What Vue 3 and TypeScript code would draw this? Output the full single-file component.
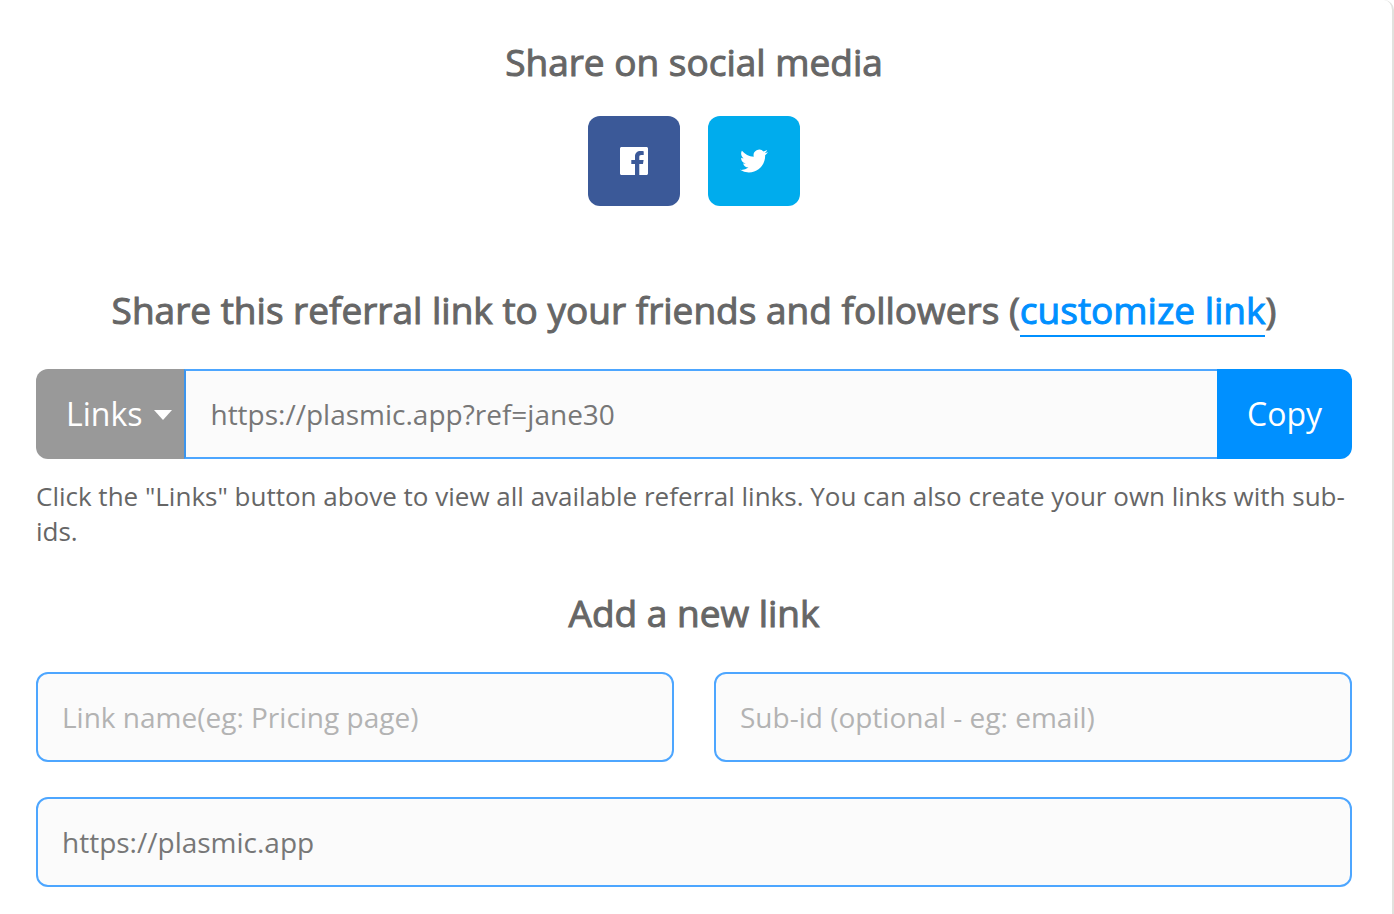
<script setup lang="ts">
import { ref } from 'vue'

const referral = ref('https://plasmic.app?ref=jane30')
const linkName = ref('')
const subId = ref('')
const target = ref('https://plasmic.app')

function copyLink(): void {
  navigator.clipboard?.writeText(referral.value)
}
</script>

<template>
  <main class="card">
    <h2 class="title">Share on social media</h2>
    <div class="social">
      <button class="social-button facebook" type="button" aria-label="Share on Facebook">
        <svg viewBox="0 0 28 28" width="28" height="28" aria-hidden="true">
          <path
            fill="#fff"
            d="M26.5 0H1.5C.7 0 0 .7 0 1.500V26.500C0 27.300.7 28 1.500 28H15V17.100H11.300V12.900H15V9.700C15 6.100 17.200 4.100 20.500 4.100C22 4.100 23.300 4.200 23.700 4.300V8.100H21.400C19.600 8.100 19.300 9 19.300 10.200V12.900H23.600L23 17.100H19.300V28H26.500C27.300 28 28 27.300 28 26.500V1.500C28 .7 27.300 0 26.500 0Z"
          />
        </svg>
      </button>
      <button class="social-button twitter" type="button" aria-label="Share on Twitter">
        <svg viewBox="0 0 24 24" width="28" height="28" aria-hidden="true">
          <path
            fill="#fff"
            d="M23.953 4.57a10 10 0 0 1-2.825.775 4.958 4.958 0 0 0 2.163-2.723c-.951.555-2.005.959-3.127 1.184a4.92 4.92 0 0 0-8.384 4.482C7.69 8.095 4.067 6.13 1.64 3.162a4.822 4.822 0 0 0-.666 2.475c0 1.71.87 3.213 2.188 4.096a4.904 4.904 0 0 1-2.228-.616v.06a4.923 4.923 0 0 0 3.946 4.827 4.996 4.996 0 0 1-2.212.085 4.936 4.936 0 0 0 4.604 3.417 9.867 9.867 0 0 1-6.102 2.105c-.39 0-.779-.023-1.17-.067a13.995 13.995 0 0 0 7.557 2.209c9.053 0 13.998-7.496 13.998-13.985 0-.21 0-.42-.015-.63A9.935 9.935 0 0 0 24 4.59z"
          />
        </svg>
      </button>
    </div>

    <h2 class="title">
      Share this referral link to your friends and followers (<a class="customize" href="#customize">customize link</a>)
    </h2>
    <div class="referral">
      <button class="links" type="button">
        Links
        <svg class="caret" viewBox="0 0 20 12" width="20" height="12" aria-hidden="true">
          <path d="M1 1H19L10 11Z" fill="#fff" />
        </svg>
      </button>
      <input v-model="referral" class="field joined" type="text" aria-label="Referral link" readonly />
      <button class="copy" type="button" @click="copyLink">Copy</button>
    </div>
    <p class="hint">
      Click the "Links" button above to view all available referral links. You can also create your own links with
      sub-ids.
    </p>

    <h2 class="title">Add a new link</h2>
    <form class="new-link" @submit.prevent>
      <input v-model="linkName" class="field" type="text" aria-label="Link name" placeholder="Link name(eg: Pricing page)" />
      <input v-model="subId" class="field" type="text" aria-label="Sub-id" placeholder="Sub-id (optional - eg: email)" />
      <input v-model="target" class="field wide" type="text" aria-label="Link address" />
    </form>
  </main>
</template>

<style>
body {
  margin: 0;
  background: #fff;
}
</style>

<style scoped>
.card {
  box-sizing: border-box;
  min-height: 100vh;
  padding: 36px 40px 27px 36px;
  border-right: 2px solid #e1e2de;
  border-top-right-radius: 10px;
  background: #fff;
  color: #666;
  font-family: "Open Sans", "Noto Sans", sans-serif;
}

.title {
  margin: 0;
  font-size: 37px;
  font-weight: 400;
  line-height: 52px;
  text-align: center;
  -webkit-text-stroke: 1px currentColor;
}

.customize {
  border-bottom: 2px solid #0090ff;
  color: #0090ff;
  text-decoration: none;
}

.social {
  display: flex;
  justify-content: center;
  gap: 28px;
  margin: 28px 0 78px;
}

.social-button {
  display: flex;
  align-items: center;
  justify-content: center;
  width: 92px;
  height: 90px;
  padding: 0;
  border: 0;
  border-radius: 12px;
  cursor: pointer;
}

.facebook {
  background: #3b5998;
}

.twitter {
  background: #00aced;
}

.referral {
  display: flex;
  height: 90px;
  margin-top: 33px;
}

.links,
.copy {
  border: 0;
  padding-bottom: 2px;
  color: #fff;
  font-family: inherit;
  font-size: 32px;
  cursor: pointer;
}

.links {
  display: flex;
  align-items: center;
  gap: 11px;
  padding: 0 11px 2px 30px;
  border-radius: 12px 0 0 12px;
  background: #999;
}

.caret {
  margin-top: 4px;
}

.copy {
  padding: 0 30px 2px;
  border-radius: 0 12px 12px 0;
  background: #0090ff;
}

.field {
  box-sizing: border-box;
  width: 100%;
  min-width: 0;
  height: 90px;
  padding: 0 24px;
  border: 2px solid #4da6ff;
  border-radius: 12px;
  outline: 0;
  background: #fbfbfb;
  color: #777;
  font-family: inherit;
  font-size: 28px;
}

.field::placeholder {
  color: #b3b3b3;
  opacity: 1;
}

.joined {
  flex: 1;
  border-right: 0;
  border-left-color: #3b94ec;
  border-radius: 0;
}

.hint {
  margin: 20px 0 38px;
  font-size: 26px;
  line-height: 35px;
}

.new-link {
  display: grid;
  grid-template-columns: 1fr 1fr;
  gap: 35px 40px;
  margin-top: 33px;
}

.wide {
  grid-column: 1 / -1;
}
</style>
